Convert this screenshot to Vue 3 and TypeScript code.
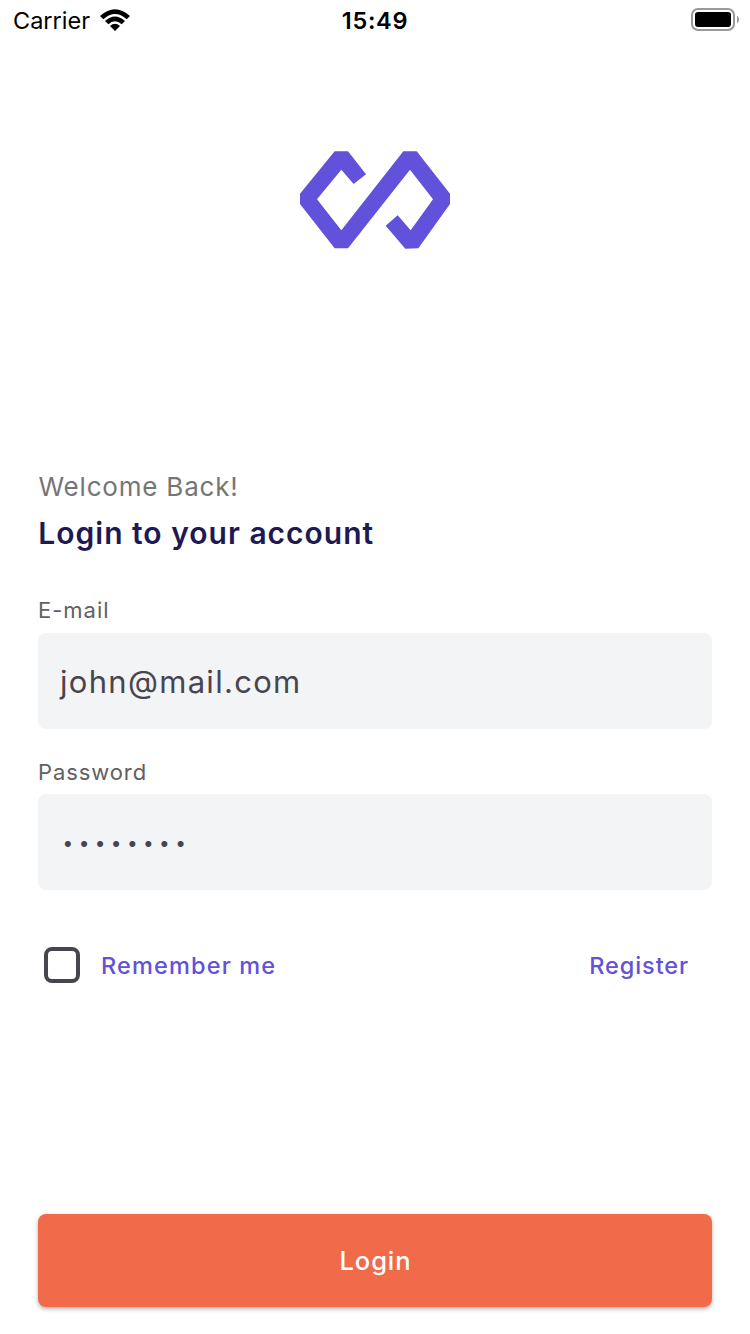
<script setup lang="ts">
import { ref } from 'vue'

const email = ref<string>('john@mail.com')
const password = ref<string>('password')
const remember = ref<boolean>(false)
</script>

<template>
  <div class="screen">
    <header class="status">
      <div class="carrier">
        <span class="carrier-name">Carrier</span>
        <svg class="wifi" viewBox="0 0 90 66" aria-hidden="true">
          <path d="M0 21 Q45 -20 90 21 L80 31 Q45 -1 10 31 Z" />
          <path d="M15 36 Q45 9 75 36 L65 46 Q45 28 25 46 Z" />
          <path d="M30 51 Q45 38 60 51 L45 66 Z" />
        </svg>
      </div>
      <span class="time">15:49</span>
      <svg class="battery" viewBox="0 0 48 24" aria-hidden="true">
        <rect class="shell" x="1" y="1" width="42" height="21" rx="6" />
        <rect x="4" y="4" width="36" height="15" rx="3" />
        <path class="cap" d="M46 7.5 Q48 9 48 11.5 Q48 14 46 15.5 Z" />
      </svg>
    </header>

    <svg class="logo" viewBox="0 -1 450 294" aria-hidden="true">
      <path d="M104 0H144L198 69L161 98L124 55L51 144L124 237L310 0H350L450 127V158L355 291L316 292L257 223L293 192L332 237L399 144L330 55L144 291H104L0 158V127Z" />
    </svg>

    <form class="form" @submit.prevent>
      <p class="welcome">Welcome Back!</p>
      <h1 class="title">Login to your account</h1>

      <label class="label">E-mail</label>
      <div class="field">{{ email }}</div>

      <label class="label second">Password</label>
      <div class="field secret">{{ '•'.repeat(password.length) }}</div>

      <div class="options">
        <div class="remember" @click="remember = !remember">
          <span class="box" :class="{ on: remember }"></span>
          <span class="link">Remember me</span>
        </div>
        <a class="link register">Register</a>
      </div>

      <button class="submit" type="submit">Login</button>
    </form>
  </div>
</template>

<style>
body {
  background: #fff;
}
</style>

<style scoped>
.screen {
  width: 750px;
  height: 1334px;
  box-sizing: border-box;
  overflow: hidden;
  display: flex;
  flex-direction: column;
  background: #fff;
  font-family: Inter, "Liberation Sans", sans-serif;
}
.status {
  display: grid;
  grid-template-columns: 1fr auto 1fr;
  align-items: center;
  height: 41px;
  padding: 0 13px;
  color: #000;
}
.carrier {
  display: flex;
  align-items: center;
  gap: 9.5px;
}
.carrier-name {
  font-size: 23.5px;
}
.wifi {
  width: 30px;
  height: 22px;
  margin-bottom: 1px;
}
.time {
  font-size: 23.5px;
  font-weight: 600;
  letter-spacing: 0.7px;
}
.battery {
  width: 48px;
  height: 24px;
  margin: 0 -2px 1px 0;
  justify-self: end;
}
.shell {
  fill: none;
  stroke: #999;
  stroke-width: 2;
}
.cap {
  fill: #999;
}
.logo {
  width: 150px;
  height: 98px;
  margin: 110px auto 0;
  flex: none;
  fill: #6151db;
}
.form {
  display: flex;
  flex-direction: column;
  margin: 221px 38px 0;
}
.welcome {
  margin: 0;
  padding-left: 0.5px;
  font-size: 26px;
  line-height: 33px;
  letter-spacing: 0.8px;
  color: #757575;
}
.title {
  margin: 10px 0 0;
  padding-left: 0.3px;
  font-size: 30px;
  font-weight: 600;
  line-height: 41px;
  letter-spacing: 1px;
  color: #1d1a52;
}
.label {
  margin-top: 41px;
  font-size: 22px;
  line-height: 30px;
  letter-spacing: 1px;
  color: #616161;
}
.label.second {
  margin-top: 28px;
  letter-spacing: 0.9px;
}
.field {
  box-sizing: border-box;
  height: 96px;
  margin-top: 8px;
  padding-left: 22px;
  border-radius: 8px;
  background: #f3f4f6;
  color: #49454f;
  font-size: 31px;
  line-height: 97px;
  letter-spacing: 1.3px;
}
.secret {
  margin-top: 7px;
  padding-left: 24.6px;
  font-size: 19px;
  line-height: 100px;
  letter-spacing: 5.4px;
}
.options {
  display: flex;
  justify-content: space-between;
  align-items: center;
  height: 36px;
  margin-top: 57px;
  padding: 0 23px 0 5.5px;
}
.remember {
  display: flex;
  align-items: center;
  gap: 21.5px;
}
.box {
  box-sizing: border-box;
  width: 36px;
  height: 36px;
  border: 4px solid #49454f;
  border-radius: 8px;
}
.box.on {
  background: #6151db;
}
.link {
  font-size: 23.5px;
  font-weight: 500;
  line-height: 37px;
  letter-spacing: 1.15px;
  color: #6151db;
}
.register {
  letter-spacing: 0.9px;
}
.submit {
  height: 93px;
  margin-top: 231px;
  padding: 0 0 0 1px;
  border: 0;
  border-radius: 8px;
  background: #f16b4a;
  box-shadow: 0 2px 4px rgba(0, 0, 0, 0.3);
  color: #fff;
  font-family: inherit;
  font-size: 25.5px;
  font-weight: 500;
  letter-spacing: 0.9px;
}
</style>
